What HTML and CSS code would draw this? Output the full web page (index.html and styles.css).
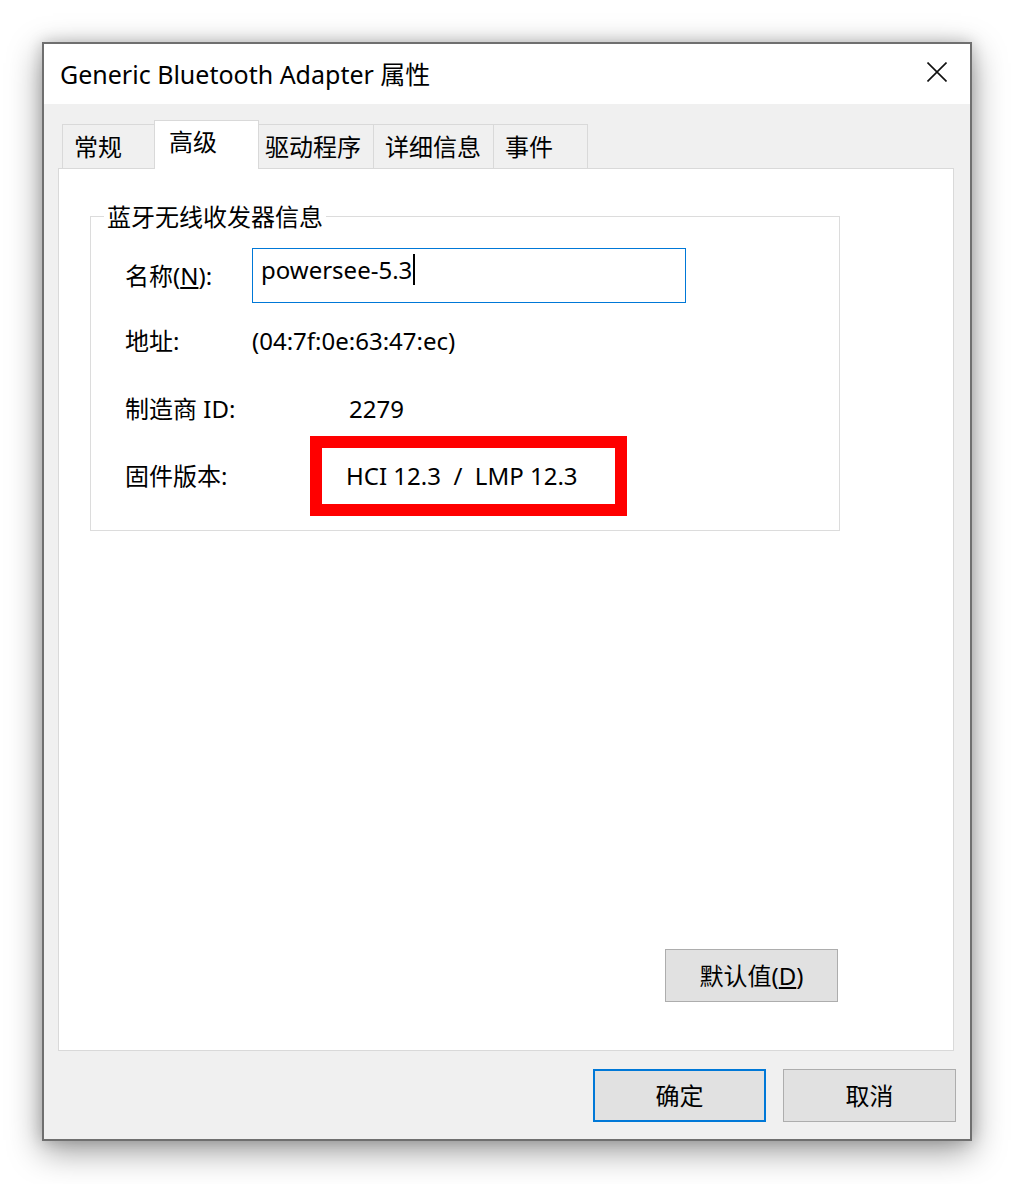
FILE: index.html
```html
<!DOCTYPE html>
<html lang="zh-CN">
<head>
<meta charset="utf-8">
<title>Generic Bluetooth Adapter 属性</title>
<link rel="stylesheet" href="styles.css">
</head>
<body>
<div class="window">
  <div class="titlebar">
    <span class="title">Generic Bluetooth Adapter 属性</span>
    <svg class="close" width="20" height="20" viewBox="0 0 20 20" aria-label="关闭">
      <path d="M0.5 0.5 L19.5 19.5 M19.5 0.5 L0.5 19.5" stroke="#111" stroke-width="1.6" fill="none"/>
    </svg>
  </div>
  <div class="body">
    <div class="tabs">
      <div class="tab tab-general">常规</div>
      <div class="tab tab-active tab-adv">高级</div>
      <div class="tab tab-driver">驱动程序</div>
      <div class="tab tab-detail">详细信息</div>
      <div class="tab tab-events">事件</div>
    </div>
    <div class="panel">
      <fieldset class="group">
        <legend class="group-title">蓝牙无线收发器信息</legend>
        <div class="row row-name">
          <span class="label">名称(<u>N</u>):</span>
          <div class="input"><span class="input-text">powersee-5.3</span><span class="caret"></span></div>
        </div>
        <div class="row row-addr">
          <span class="label">地址:</span>
          <span class="value">(04:7f:0e:63:47:ec)</span>
        </div>
        <div class="row row-mfr">
          <span class="label">制造商 ID:</span>
          <span class="value value-mfr">2279</span>
        </div>
        <div class="row row-fw">
          <span class="label">固件版本:</span>
          <span class="highlight">HCI 12.3  /  LMP 12.3</span>
        </div>
      </fieldset>
      <div class="panel-actions">
        <button class="btn">默认值(<u>D</u>)</button>
      </div>
    </div>
    <div class="footer">
      <button class="btn btn-default">确定</button>
      <button class="btn">取消</button>
    </div>
  </div>
</div>
</body>
</html>
```
FILE: styles.css
```css
* { box-sizing: border-box; }

html, body {
  margin: 0;
  padding: 0;
  background: #ffffff;
}

body {
  font-family: "Noto Sans", "Noto Sans CJK SC", sans-serif;
  font-size: 24px;
  color: #000;
  padding: 42px 0 0 42px;
  min-height: 1184px;
}

.window {
  width: 930px;
  height: 1099px;
  border: 2px solid #6f6f6f;
  background: #f0f0f0;
  display: flex;
  flex-direction: column;
  box-shadow: 0 10px 32px rgba(0, 0, 0, 0.4), 0 0 14px rgba(0, 0, 0, 0.18);
}

.titlebar {
  height: 60px;
  background: #ffffff;
  display: flex;
  align-items: center;
  justify-content: space-between;
  padding: 0 23px 0 16px;
}

.title {
  font-size: 25px;
  line-height: 30px;
  white-space: nowrap;
}

.close {
  display: block;
  margin-bottom: 4px;
}

.body {
  flex: 1;
  display: flex;
  flex-direction: column;
  padding-top: 16px;
}

.tabs {
  display: flex;
  align-items: flex-end;
  height: 49px;
  margin: 0 0 -1px 18px;
  position: relative;
  z-index: 1;
}

.tab {
  height: 45px;
  border: 1px solid #d9d9d9;
  background: #f0f0f0;
  margin-right: -1px;
  display: flex;
  align-items: center;
  line-height: 30px;
  white-space: nowrap;
  padding-top: 1px;
}

.tab-active {
  height: 49px;
  background: #ffffff;
  border-bottom: none;
  position: relative;
  z-index: 2;
  padding-bottom: 7px;
}

.tab-general { width: 93px; padding-left: 11px; }
.tab-adv { width: 105px; padding-left: 14px; }
.tab-driver { width: 116px; padding-left: 6px; }
.tab-detail { width: 121px; padding-left: 11px; }
.tab-events { width: 95px; padding-left: 11px; }

.panel {
  flex: 1;
  margin: 0 16px 0 14px;
  background: #ffffff;
  border: 1px solid #d9d9d9;
  display: flex;
  flex-direction: column;
}

.group {
  margin: 32px 113px 0 31px;
  padding: 16px 0 14px 0;
  border: 1px solid #dcdcdc;
  min-inline-size: 0;
}

.group-title {
  margin-left: 13px;
  padding: 0 3px;
  line-height: 31px;
}

.row {
  display: flex;
  align-items: center;
  padding-left: 34px;
  line-height: 32px;
}

.label {
  width: 127px;
  flex: none;
  white-space: nowrap;
}

.row-name { height: 55px; }
.row-addr { height: 34px; margin-top: 21px; }
.row-mfr { height: 34px; margin-top: 34px; }
.row-fw { height: 80px; margin-top: 10px; }

.input {
  width: 434px;
  height: 55px;
  border: 1px solid #0078d7;
  align-self: stretch;
  padding: 5px 0 0 8px;
  display: flex;
  align-items: flex-start;
}

.caret {
  display: inline-block;
  width: 2px;
  height: 31px;
  background: #000;
  margin: 0 0 0 1px;
}

.value { white-space: nowrap; }
.value-mfr { margin-left: 97px; }

.highlight {
  margin-left: 58px;
  width: 317px;
  height: 80px;
  border: 12px solid #ff0000;
  padding-left: 24px;
  display: flex;
  align-items: center;
  white-space: pre;
}

.panel-actions {
  margin-top: auto;
  margin-bottom: 48px;
  margin-right: 115px;
  display: flex;
  justify-content: flex-end;
}

.btn {
  font-family: inherit;
  font-size: 24px;
  color: #000;
  width: 173px;
  height: 53px;
  background: #e1e1e1;
  border: 1px solid #adadad;
  padding: 0;
  line-height: 30px;
  display: flex;
  align-items: center;
  justify-content: center;
}

.btn-default {
  border: 2px solid #0078d7;
}

.footer {
  display: flex;
  justify-content: flex-end;
  gap: 17px;
  padding: 18px 14px 17px 0;
}
```
